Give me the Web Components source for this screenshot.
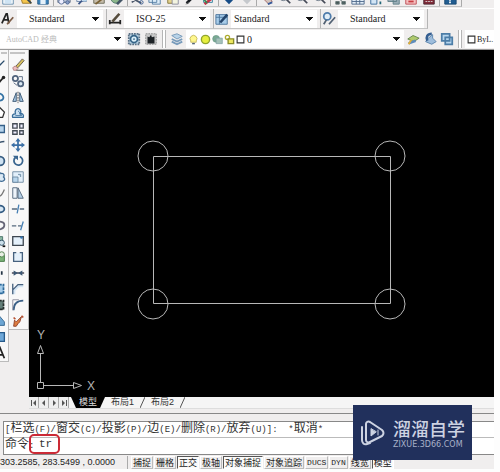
<!DOCTYPE html>
<html lang="zh-CN">
<head>
<meta charset="utf-8">
<title>AutoCAD</title>
<style>
html,body{margin:0;height:100%;background:#fdfdfd;overflow:hidden}
body{font-family:"Liberation Sans","Noto Sans CJK SC",sans-serif;font-size:9px;color:#222}
</style>
</head>
<body>
<cad-app></cad-app>
<script>
const ICONS={
 page:'<path d="M2 1h12v14H2z" fill="#fff" stroke="#5c86a8"/><path d="M4 8h8v6H4z" fill="#cfe4f4"/>',
 open:'<path d="M1 4h9l4 10H4z" fill="#f5c64e" stroke="#9a7420"/><path d="M8 8l6 6" stroke="#345" stroke-width="2"/>',
 save:'<path d="M2 2h12v13H2z" fill="#3d83bb" stroke="#255a86"/><path d="M5 10h6v5H5z" fill="#e6f1fa"/>',
 print:'<path d="M1 7h14v6H1z" fill="#b9c4d6" stroke="#57657e"/><circle cx="5" cy="12" r="3" fill="#eef" stroke="#556a94"/><circle cx="12" cy="13" r="2" fill="#8ba0c8" stroke="#4d6291"/>',
 preview:'<path d="M2 3h11v9H2z" fill="#e9eff8" stroke="#6b83a6"/><path d="M4 15l4-4" stroke="#3d5687" stroke-width="2"/><circle cx="11" cy="9" r="3" fill="#bcd9ee"/>',
 plot:'<path d="M2 9h12v5H2z" fill="#c7bdab" stroke="#665"/><path d="M4 15l9-7" stroke="#7a6033" stroke-width="2"/>',
 globe:'<circle cx="7" cy="8" r="6" fill="#8db78c" stroke="#4d776a"/><path d="M8 15l6-6" stroke="#456" stroke-width="3"/>',
 cut:'<path d="M2 8l11 6M2 13l9-6" stroke="#4c586b" stroke-width="2"/><circle cx="13" cy="13" r="2" fill="none" stroke="#35578b"/>',
 copyc:'<path d="M1 3h9v10H1zM5 6h9v9H5z" fill="#ddecf8" stroke="#527ba0"/>',
 paste:'<path d="M2 3h10v11H2z" fill="#e4d38e" stroke="#807135"/><path d="M7 7h7v8H7z" fill="#f3f4df" stroke="#889"/>',
 brush:'<path d="M3 14l9-9" stroke="#171b20" stroke-width="3"/><path d="M2 15l4-2" stroke="#666"/>',
 block:'<path d="M3 7h10v6H3z" fill="#eee" stroke="#297b9b"/><path d="M4 15L13 8" stroke="#c63349" stroke-width="3"/><path d="M3 9l4 5" stroke="#398d54" stroke-width="2"/>',
 down:'<path d="M8 5v6" stroke="#174d87" stroke-width="3"/><path d="M3 10h10l-5 5z" fill="#174d87"/>',
 downg:'<path d="M8 5v6" stroke="#c5c8cc" stroke-width="3"/><path d="M3 10h10l-5 5z" fill="#c5c8cc"/>',
 pan:'<path d="M3 8l5-3 6 7-4 3z" fill="#d4c5bd" stroke="#a46662"/><path d="M9 15l5-2" stroke="#385b9a" stroke-width="2"/>',
 zoom:'<circle cx="6" cy="6" r="5" fill="#e2edf4" stroke="#6b7785"/><path d="M9 9l5 5" stroke="#464b58" stroke-width="2"/>',
 dots:'<path d="M2 12h4v3H2zM9 12h4v3H9zM3 7l8 6" fill="#455" stroke="#677"/>',
 grid:'<path d="M1 4h14v11H1z" fill="#e3edf7" stroke="#4a6688"/><path d="M1 12h14M6 4v11M10 4v11" stroke="#4a6688"/>',
 grid2:'<path d="M2 4h7v11H2z" fill="#d3e5f5" stroke="#356798"/><path d="M13 7v3M13 12v3" stroke="#267" stroke-width="2"/>',
 sheets:'<path d="M1 5h10v7H1zM7 9h7v6H7z" fill="#9caeb8" stroke="#5e7e86"/>',
 red:'<path d="M2 6h12v9H2z" fill="#f5c0c0" stroke="#bd4850"/><path d="M5 12h6" stroke="#c83d42" stroke-width="2"/>',
 calc:'<path d="M2 4h12v11H2z" fill="#822c39" stroke="#482530"/><path d="M4 12h8" stroke="#ddd" stroke-dasharray="2 1"/>',
 help:'<path d="M2 3h13v12H2z" fill="#215d91" stroke="#17476f"/><path d="M8 8v3m0 1v2" stroke="#fff" stroke-width="2"/>',
 tstyle:'<path d="M1 13L6 2h1l2 11M3 9h6" fill="none" stroke="#222" stroke-width="2"/><path d="M7 14l7-8" stroke="#7b5b45" stroke-width="2"/>',
 dim:'<path d="M2 9v5M2 12h12M14 9v5" fill="none" stroke="#222" stroke-width="2"/><path d="M5 11l8-9" stroke="#554b3c" stroke-width="3"/>',
 table:'<path d="M1 3h13v11H1z" fill="#a8cce9" stroke="#456f98"/><path d="M1 6h13M5 3v11" stroke="#456f98"/><path d="M6 12l8-9" stroke="#25456b" stroke-width="3"/>',
 mleader:'<circle cx="6" cy="5" r="4" fill="#e1edf7" stroke="#4e7cab" stroke-width="2"/><path d="M2 14l3-5M8 14l7-8" stroke="#526173" stroke-width="2"/>',
 gear:'<path d="M2 2h12v12H2z" fill="#b8d2e4" stroke="#5b7286" stroke-width="2" stroke-dasharray="2 1"/><circle cx="8" cy="8" r="4" fill="#d9edf7" stroke="#356487" stroke-width="2"/><circle cx="8" cy="8" r="1" fill="#356487"/>',
 wsave:'<path d="M2 2h12v12H2z" fill="#c9c9c9" stroke="#888" stroke-dasharray="2 1"/><path d="M4 5l2 1 2-3 1 3 3-1v8H4z" fill="#1e2226"/>',
 layers:'<path d="M2 4l6-2 6 3-6 3z" fill="#b8d3e9" stroke="#7195b5"/><path d="M2 8l6 3 6-3M2 11l6 3 6-3" fill="none" stroke="#789bbb" stroke-width="2"/>',
 bulb:'<path d="M4 10a5 5 0 1 1 8 0v2H4z" fill="#fff78e" stroke="#b0a445"/><path d="M6 13h4v2H6z" fill="#567"/>',
 sun:'<circle cx="8" cy="8" r="6" fill="#e7ef3e" stroke="#91a52e" stroke-width="2"/>',
 vp:'<circle cx="6" cy="7" r="5" fill="#79aa92" stroke="#6b9888"/><path d="M6 6h9v8H6z" fill="#a5c2b9" stroke="#7c9ca0"/>',
 lock:'<circle cx="5" cy="5" r="3" fill="none" stroke="#adac2e" stroke-width="2"/><path d="M6 7h8v7H6z" fill="#eee861" stroke="#8b8d2a" stroke-width="2"/>',
 swatch:'<path d="M2 2h12v12H2z" fill="#fff" stroke="#333" stroke-width="2"/>',
 lprev:'<path d="M2 8l6-4 7 3-6 4z" fill="#afc96c" stroke="#64834d"/><path d="M3 13l8-3" stroke="#5d8bbd" stroke-width="3"/><path d="M3 14l3-5" stroke="#e1af39" stroke-width="2"/>',
 lback:'<path d="M5 8l6-5v4l4 4-5 3-7-3z" fill="#9ebddc" stroke="#557fa9"/><path d="M10 2C5 2 3 6 5 10" fill="none" stroke="#345e91" stroke-width="3"/>',
 lstate:'<path d="M2 2h9v8H2zM6 6h8v8H6z" fill="#b7d6ee" stroke="#4c7da7" stroke-width="2"/>',
 erase:'<path d="M5 10l8-9 2 2-7 8z" fill="#d8c15e" stroke="#5b564d"/><path d="M2 11l3-2 3 3-2 2H3z" fill="#edbec0" stroke="#b17d7d"/><path d="M6 14h8" stroke="#444"/>',
 copy:'<circle cx="5" cy="5" r="3" fill="none" stroke="#52657e" stroke-width="2"/><circle cx="11" cy="11" r="3" fill="#dae8f2" stroke="#52657e" stroke-width="2"/><path d="M9 3h4v4M3 10l4 3" fill="none" stroke="#52657e"/>',
 mirror:'<path d="M6 3v10H2zM10 3v10h4z" fill="#a8c9e4" stroke="#35516d"/><path d="M8 2v13" stroke="#333" stroke-dasharray="2 1"/>',
 offset:'<path d="M2 13h12c1-3-1-5-3-4 1-4-1-6-3-6S4 5 5 9c-3 0-4 2-3 4z" fill="#cde1f1" stroke="#376c99" stroke-width="1.5"/><path d="M5 11h7c0-2-1-2-2-2 0-2-1-3-2-3" fill="none" stroke="#376c99"/>',
 array:'<path d="M2 2h5v5H2zM10 2h4v5h-4zM2 10h5v4H2zM10 10h4v4h-4z" fill="#eef" stroke="#444c55" stroke-width="1.5"/>',
 move:'<path d="M8 3v10M3 8h10" stroke="#3a6fa5" stroke-width="2"/><path d="M8 0l3 4H5zM8 16l3-4H5zM0 8l4-3v6zM16 8l-4-3v6z" fill="#3a6fa5"/>',
 rotate:'<path d="M5 4a5 5 0 1 0 5-1" fill="none" stroke="#39658f" stroke-width="2"/><path d="M2 2h6v5z" fill="#39658f"/>',
 scale:'<path d="M2 2h12v12H2z" fill="#e2effa" stroke="#69879f"/><path d="M2 8h6v6H2zM8 5h3v3" fill="#b9d6ed" stroke="#69879f"/>',
 stretch:'<path d="M2 2h5v12H2z" fill="#eef4fa" stroke="#4c6076"/><path d="M8 2l6 12H8z" fill="#b5d0e7" stroke="#4c6076"/>',
 trim:'<path d="M1 8h6M10 8h5" stroke="#55697e" stroke-width="1.5"/><path d="M9 3L7 13" stroke="#4780b4" stroke-width="1.5"/>',
 extend:'<path d="M1 9h5M8 9h4" stroke="#55697e" stroke-width="1.5"/><path d="M14 4l-3 10" stroke="#4780b4" stroke-width="1.5"/>',
 brk1:'<path d="M2 3h12v10H2z" fill="#e4f0fa" stroke="#3d4650" stroke-width="1.5"/><circle cx="12" cy="4" r="1.5" fill="#3676b0"/>',
 brk:'<path d="M6 3H3v10h10V3h-3" fill="#e4f0fa" stroke="#46617e" stroke-width="1.5"/>',
 join:'<path d="M1 8h14" stroke="#334" stroke-width="1.5"/><path d="M3 5l5 3-5 3zM13 5L8 8l5 3z" fill="#3c5874"/>',
 chamfer:'<path d="M2 14V9l6-6h6v3H9l-4 4v4z" fill="#d4e5f3"/><path d="M2 2v12M2 9l6-6h6" fill="none" stroke="#46617e" stroke-width="1.5"/>',
 fillet:'<path d="M3 14C3 7 7 3 14 3" fill="none" stroke="#3b6087" stroke-width="2"/><path d="M2 14V2h7" fill="none" stroke="#889"/>',
 explode:'<path d="M3 14l1-7 2 2 6-6-2 6-2 2-2 3z" fill="#dc7d41" stroke="#8c3c24"/><path d="M12 2l2 2M3 4l2 2" stroke="#b65334" stroke-width="2"/>',
 line:'<path d="M2 14L13 3" stroke="#294b6b" stroke-width="1.5"/>',
 xline:'<path d="M3 14l9-10" stroke="#222" stroke-width="2"/><circle cx="12" cy="4" r="2" fill="#222"/>',
 pline:'<path d="M3 5c9-4 12 7 5 7" fill="none" stroke="#3573a4" stroke-width="2"/>',
 poly:'<path d="M8 2l5 5-2 6H5L3 7z" fill="#fff" stroke="#333" stroke-width="1.5"/>',
 rect:'<path d="M1 4h12v8H1z" fill="#b7d4ec" stroke="#345f88" stroke-width="1.5"/>',
 arc:'<path d="M2 13C3 7 7 4 13 4" fill="none" stroke="#3a536d" stroke-width="1.5"/>',
 circle:'<circle cx="8" cy="8" r="5" fill="#cfe2f2" stroke="#375d82" stroke-width="2"/>',
 cloud:'<path d="M3 12c-2-3 0-4 1-4-1-4 4-6 5-4 4-1 4 3 3 4 3 3 0 5-2 5z" fill="#dceaf5" stroke="#3f6b93" stroke-width="1.5"/>',
 spline:'<path d="M2 5c3 9 7 9 11-1" fill="none" stroke="#777" stroke-width="1.5"/>',
 ellipse:'<ellipse cx="7" cy="8" rx="6" ry="4" fill="#d7e7f4" stroke="#355d84" stroke-width="2"/>',
 earc:'<path d="M3 11c4 4 10 1 10-3S7 3 3 6" fill="none" stroke="#667" stroke-width="2"/>',
 insert:'<path d="M2 3h9v8H2z" fill="#8db8a4" stroke="#436f63"/><circle cx="10" cy="10" r="3" fill="#ccdfea" stroke="#28485e"/><path d="M11 13h3v2h-3z" fill="#111"/>',
 make:'<path d="M3 6h10v7H3z" fill="#7bb379" stroke="#3b713d"/><circle cx="10" cy="5" r="3" fill="#e8efe4" stroke="#497b48"/>',
 point:'<path d="M9 6h2v4H9z" fill="#234"/>',
 hatch:'<path d="M3 3h9v10H3z" fill="#a5cce9" stroke="#2d6a9b" stroke-width="2" stroke-dasharray="3 1"/>',
 grad:'<path d="M3 3h9v10H3z" fill="#637f79" stroke="#252e2c" stroke-width="2" stroke-dasharray="3 1"/>',
 region:'<path d="M3 13V8l5-5 5 6v4z" fill="#6da6d3" stroke="#2e618b"/>',
 tbl:'<path d="M2 3h11v10H2z" fill="#6fa8d8" stroke="#275b8b" stroke-width="1.5"/>',
 text:'<path d="M3 14L8 2l5 12M5 10h6" fill="none" stroke="#222" stroke-width="2"/>'
};
const svg=(n,s)=>`<svg viewBox="0 0 16 16" width="${s}" height="${s}" aria-hidden="true">${ICONS[n]}</svg>`;
const define=(name,html)=>customElements.define(name,class extends HTMLElement{
 constructor(){super();this.attachShadow({mode:'open'}).innerHTML=typeof html==='function'?html(this):html;}
});

customElements.define('cad-tool',class extends HTMLElement{
 connectedCallback(){
  if(this.shadowRoot)return;
  const n=this.getAttribute('icon');
  this.attachShadow({mode:'open'}).innerHTML=`<style>:host{display:block;flex:none}button{display:grid;place-items:center;width:16px;height:16px;padding:0;border:0;background:none}svg{display:block}</style><button type="button" aria-label="${n}">${svg(n,14)}</button>`;
 }
});

customElements.define('cad-select',class extends HTMLElement{
 connectedCallback(){
  if(this.shadowRoot)return;
  const v=this.getAttribute('value'),l=this.getAttribute('label');
  this.attachShadow({mode:'open'}).innerHTML=`<style>
  :host{display:flex;align-items:center;background:#fff;min-width:0;overflow:hidden;height:18px;color:#222}
  slot{display:contents}
  select{flex:1;min-width:0;height:18px;appearance:none;border:0;border-radius:0;margin:0;padding:0 12px 0 var(--inset,12px);color:inherit;font:var(--size,10px) "Liberation Serif","Noto Sans CJK SC",serif;
  background:conic-gradient(from 315deg at 50% 100%,#111 90deg,transparent 0) right 4px center/7px 4px no-repeat}
  </style><slot></slot><select aria-label="${l}"><option>${v}</option></select>`;
 }
});

define('cad-standard-bar',()=>{
 const b=['page','open','save','|','print','preview','plot','globe','|','cut','copyc','paste','brush','block','|','down','downg','|','pan','zoom','zoom','zoom','|','dots','grid','grid2','sheets','red','calc','|','help'];
 return `<style>
 :host{display:flex;height:8px;overflow:hidden}
 div{display:flex;align-items:flex-end;justify-content:space-between;width:462px;height:7px;padding-right:3px;box-sizing:border-box;border-right:1px solid #aaa;border-bottom:1px solid #c4c4c4}
 i{width:1px;height:7px;background:#aaa}
 </style><div role="toolbar">${b.map(x=>x==='|'?'<i></i>':`<cad-tool icon="${x}"></cad-tool>`).join('')}</div>`;
});

define('cad-style-bar',`<style>
 :host{display:flex;height:20px;border-top:1px solid #fff}
 div{display:flex;align-items:center;box-sizing:border-box;width:107px;height:20px;padding-right:3px;gap:1px;border-right:1px solid #b5b5b5;border-bottom:1px solid #c4c4c4}
 cad-select{flex:1}
 </style>
 <div><cad-tool icon="tstyle"></cad-tool><cad-select label="文字样式" value="Standard"></cad-select></div>
 <div><cad-tool icon="dim"></cad-tool><cad-select label="标注样式" value="ISO-25"></cad-select></div>
 <div><cad-tool icon="table"></cad-tool><cad-select label="表格样式" value="Standard" style="--inset:3px"></cad-select></div>
 <div><cad-tool icon="mleader"></cad-tool><cad-select label="多重引线样式" value="Standard"></cad-select></div>`);

define('cad-layer-bar',()=>`<style>
 :host{display:flex;align-items:center;gap:1px;height:20px;border-bottom:1px solid #999;overflow:hidden}
 .ws{width:125px;flex:none;color:#bbb;--size:8px;--inset:6px}
 .ly{flex:1;--inset:2px}
 .ly span{display:flex;gap:1px;padding-left:2px;align-items:center}
 i{width:2px;height:18px;margin:0 2px;background:#fff;border:solid #b5b5b5;border-width:0 1px;flex:none}
 .pr{display:flex;align-items:center;gap:1px;box-sizing:border-box;width:29px;height:18px;padding-left:2px;background:#fff;flex:none;font:8px "Liberation Serif",serif}
 svg{flex:none}
 </style>
 <cad-select class="ws" label="工作空间" value="AutoCAD 经典"></cad-select>
 <cad-tool icon="gear"></cad-tool><cad-tool icon="wsave"></cad-tool><i></i>
 <cad-tool icon="layers"></cad-tool>
 <cad-select class="ly" label="图层" value="0"><span>${['bulb','sun','vp','lock'].map(x=>svg(x,11)).join('')}${svg('swatch',9)}</span></cad-select>
 <cad-tool icon="lprev"></cad-tool><cad-tool icon="lback"></cad-tool><cad-tool icon="lstate"></cad-tool><i></i>
 <div class="pr">${svg('swatch',9)}<span>ByL.</span></div>`);

customElements.define('cad-side-bar',class extends HTMLElement{
 connectedCallback(){
  if(this.shadowRoot)return;
  this.attachShadow({mode:'open'}).innerHTML=`<style>
  :host{display:flex;flex-direction:column;align-items:flex-end;align-self:flex-start;box-sizing:border-box;overflow:hidden;background:#f8f8f8;border-right:1px solid #bbb;border-bottom:1px solid #bbb}
  i{align-self:stretch;height:0;margin:2px 1px 3px;border:solid #c4c4c4;border-width:1px 0;flex:none}
  </style><i></i>${this.getAttribute('tools').split(' ').map(x=>`<cad-tool icon="${x}"></cad-tool>`).join('')}`;
 }
});

define('cad-drawing',`<style>
 :host{display:block;flex:1;min-width:0;background:#000;overflow:hidden}
 svg{display:block;width:100%;height:100%}
 text{font:12px "Liberation Sans",sans-serif;fill:#b4b4b4;text-anchor:middle}
 </style>
 <svg role="img" aria-label="绘图区">
 <g fill="none" stroke="#b8b8b8"><path d="M124.500 106.500h237v147h-237z"/>
 <circle cx="124" cy="106" r="15"/><circle cx="361" cy="106" r="15"/><circle cx="124" cy="254" r="15"/><circle cx="361" cy="254" r="15"/>
 <path d="M8.500 332.500h6v6h-6zM11.500 332v-29M15 335.500h30M8.500 303.500l3-8 3 8zM44.500 332.500l8 3-8 3z"/></g>
 <text x="12" y="289">Y</text><text x="62" y="340">X</text>
 </svg>`);

define('cad-tabs',`<style>
 :host{display:flex;height:11px;margin-left:29px;background:#f5f5f5;border-bottom:1px solid #ddd;overflow:hidden}
 nav{display:flex}
 button{display:grid;place-items:center;width:10px;height:11px;padding:0;border:0;border-right:1px solid #aaa;background:#eee}
 a{padding:0 6px;font-size:9px;line-height:11px;color:#333;text-decoration:none;white-space:nowrap}
 a.on{margin-left:2px;padding:0 8px;background:#000;color:#ddd;clip-path:polygon(0 0,100% 0,calc(100% - 5px) 100%,5px 100%)}
 svg{display:block}
 </style><nav>
 <button aria-label="首页"><svg width="8" height="8"><path d="M1 1h1v6H1zM6 1v6L3 4z" fill="#555"/></svg></button>
 <button aria-label="上一页"><svg width="8" height="8"><path d="M5 1v6L2 4z" fill="#555"/></svg></button>
 <button aria-label="下一页"><svg width="8" height="8"><path d="M3 1v6l3-3z" fill="#555"/></svg></button>
 <button aria-label="末页"><svg width="8" height="8"><path d="M6 1h1v6H6zM2 1v6l3-3z" fill="#555"/></svg></button>
 <a class="on" href="#model">模型</a><a href="#l1">布局1</a>
 <svg width="5" height="11"><path d="M0 11L5 0" stroke="#555"/></svg><a href="#l2">布局2</a>
 <svg width="5" height="11"><path d="M0 11L5 0" stroke="#555"/></svg></nav>`);

define('cad-command',()=>{
 const t='[栏选(F)/窗交(C)/投影(P)/边(E)/删除(R)/放弃(U)]:  *取消*'.replace(/[\u4e00-\u9fff]+/g,'<b>$&</b>');
 return `<style>
 :host{display:block;margin-top:4px;padding-top:7px;border-top:1px solid #888;background:#f0eeee;font:9px "Liberation Mono","Noto Sans CJK SC",monospace;color:#333}
 .box{margin-left:3px;background:#fff;border:1px solid #888;border-right:0}
 b{font:12px "Noto Sans CJK SC",sans-serif;line-height:10px}
 .log{height:15px;line-height:10px;padding-left:1px;white-space:pre;border-bottom:1px solid #bbb}
 .in{position:relative;display:flex;align-items:flex-start;height:16px;line-height:10px;padding-left:1px}
 label{width:34px}
 input{flex:1;min-width:0;height:12px;padding:0;border:0;outline:0;background:none;font:11px "Liberation Mono",monospace;color:#333}
 .ring{position:absolute;left:25px;top:-4px;width:27px;height:16px;border:2px solid #cb2a36;border-radius:5px;pointer-events:none}
 </style><div class="box"><div class="log">${t}</div><div class="in"><label for="c"><b>命令</b>:</label><input id="c" value="tr"><div class="ring"></div></div></div>`;
});

define('cad-status',()=>{
 const s=[['捕捉'],['栅格'],['正交',1],['极轴'],['对象捕捉',1],['对象追踪'],['DUCS',0,1],['DYN',0,1],['线宽'],['模型',1]];
 return `<style>
 :host{display:flex;align-items:center;height:14px;background:#f0eeee;overflow:hidden}
 output{box-sizing:border-box;width:128px;height:13px;line-height:13px;white-space:pre;border-right:1px solid #aaa;margin-right:3px;flex:none}
 button{padding:0 1px;height:13px;margin-right:1px;border:1px solid #fff;border-right-color:#bbb;border-bottom-color:#bbb;background:#f0eeee;color:#222;font:9px "Noto Sans CJK SC",sans-serif;line-height:11px;white-space:nowrap;flex:none}
 button.on{border-color:#555 #fff #fff #555;background:#fafafa}
 button.m{font:8px "Liberation Mono",monospace}
 </style><output>303.2585, 283.5499 , 0.0000</output>${s.map(([t,o,m])=>`<button type="button" aria-pressed="${!!o}" class="${o?'on':''} ${m?'m':''}">${t}</button>`).join('')}`;
});

define('cad-badge',`<style>
 :host{display:flex;align-items:center;gap:8px;box-sizing:border-box;width:119px;height:55px;padding-left:8px;background:#21305c;color:#cdd3e2;overflow:hidden}
 svg{flex:none}
 p{margin:0;white-space:nowrap}
 .a{font:500 18px "Noto Sans CJK SC",sans-serif;line-height:24px}
 .b{font:8px "DejaVu Sans",sans-serif;line-height:10px;color:#a8b1c9}
 </style>
 <svg width="24" height="26" viewBox="0 0 24 26" fill="none" stroke="#cdd3e2" stroke-width="2" stroke-linecap="round" stroke-linejoin="round">
 <path d="M5 4c0-2 2-3 4-2l12 8c2 2 2 4 0 6L9 22c-2 1-4 0-4-2zM1 7v13c0 3 2 5 5 4l3-1"/><path d="M10 9v7l5-4z" fill="#cdd3e2" stroke-width="1"/><path d="M17 10v5" stroke-width="1"/></svg>
 <div><p class="a">溜溜自学</p><p class="b">ZIXUE.3D66.COM</p></div>`);

define('cad-app',`<style>
 :host{display:flex;flex-direction:column;position:relative;box-sizing:border-box;height:100vh;padding:0 6px 3px 0}
 header,footer{background:#f0eeee}
 main{display:flex;flex:1;min-height:0;background:#f0eeee}
 .d{width:9px}.m{width:20px;padding-right:2px}
 cad-badge{position:absolute;right:28px;bottom:12px}
 </style>
 <header><cad-standard-bar></cad-standard-bar><cad-style-bar></cad-style-bar><cad-layer-bar></cad-layer-bar></header>
 <main><cad-side-bar class="d" tools="line xline pline poly rect arc circle cloud spline ellipse earc insert make point hatch grad region tbl text"></cad-side-bar>
 <cad-side-bar class="m" tools="erase copy mirror offset array move rotate scale stretch trim extend brk1 brk join chamfer fillet explode"></cad-side-bar>
 <cad-drawing></cad-drawing></main>
 <footer><cad-tabs></cad-tabs><cad-command></cad-command><cad-status></cad-status></footer>
 <cad-badge></cad-badge>`);
</script>
</body>
</html>
